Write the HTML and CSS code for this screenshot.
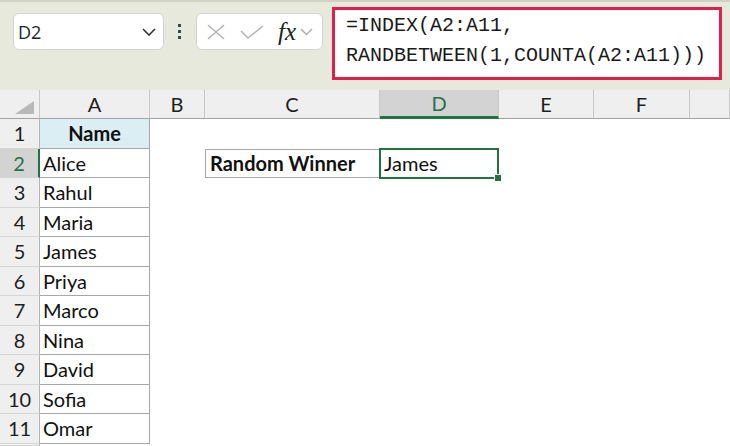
FILE: index.html
```html
<!DOCTYPE html>
<html>

<head>
    <title>Random Winner</title>
    <link rel="stylesheet" href="styles.css">
</head>

<body>
    <div class="toolbar">
        <div class="nameBox">
            <span>D2</span>
            <svg width="14" height="8" viewBox="0 0 14 8"><path d="M1 1 L7 7 L13 1" fill="none" stroke="#333" stroke-width="1.6"/></svg>
        </div>
        <div class="grip"><i></i><i></i><i></i></div>
        <div class="fxBox">
            <svg width="18" height="16" viewBox="0 0 18 16"><path d="M1 1 L17 15 M17 1 L1 15" fill="none" stroke="#b4b4b4" stroke-width="1.5"/></svg>
            <svg width="24" height="14" viewBox="0 0 24 14"><path d="M1 6 L8 13 L23 1" fill="none" stroke="#b4b4b4" stroke-width="1.5"/></svg>
            <span class="fx">fx</span>
            <svg width="13" height="8" viewBox="0 0 13 8"><path d="M1 1 L6.5 6.5 L12 1" fill="none" stroke="#aaa" stroke-width="1.4"/></svg>
        </div>
        <div class="formula">=INDEX(A2:A11,<br>RANDBETWEEN(1,COUNTA(A2:A11)))</div>
    </div>

    <div class="sheet">
        <div class="row headRow">
            <div class="corner"><svg width="19" height="13" viewBox="0 0 19 13"><path d="M19 0 L19 13 L0 13 Z" fill="#b9b9b9"/></svg></div>
            <div class="colHead">A</div>
            <div class="colHead">B</div>
            <div class="colHead">C</div>
            <div class="colHead active">D</div>
            <div class="colHead">E</div>
            <div class="colHead">F</div>
            <div class="colHead"></div>
        </div>
        <div class="row">
            <div class="rowHead">1</div>
            <div class="cell nameCell">Name</div>
        </div>
        <div class="row">
            <div class="rowHead active">2</div>
            <div class="cell">Alice</div>
            <div></div>
            <div class="labelCell">Random Winner</div>
            <div class="resultCell">James<span class="handle"></span></div>
        </div>
        <div class="row">
            <div class="rowHead">3</div>
            <div class="cell">Rahul</div>
        </div>
        <div class="row">
            <div class="rowHead">4</div>
            <div class="cell">Maria</div>
        </div>
        <div class="row">
            <div class="rowHead">5</div>
            <div class="cell">James</div>
        </div>
        <div class="row">
            <div class="rowHead">6</div>
            <div class="cell">Priya</div>
        </div>
        <div class="row">
            <div class="rowHead">7</div>
            <div class="cell">Marco</div>
        </div>
        <div class="row">
            <div class="rowHead">8</div>
            <div class="cell">Nina</div>
        </div>
        <div class="row">
            <div class="rowHead">9</div>
            <div class="cell">David</div>
        </div>
        <div class="row">
            <div class="rowHead">10</div>
            <div class="cell">Sofia</div>
        </div>
        <div class="row">
            <div class="rowHead">11</div>
            <div class="cell">Omar</div>
        </div>
        <div class="row stubRow">
            <div class="rowHead"></div>
        </div>
    </div>
</body>

</html>
```

FILE: styles.css
```css
* {
    box-sizing: border-box;
}
body {
    margin: 0;
    width: 730px;
    height: 446px;
    overflow: hidden;
    background-color: #fff;
    font-family: Lato, "Liberation Sans", sans-serif;
    color: #111;
}
.toolbar {
    display: flex;
    align-items: flex-start;
    height: 90px;
    background-color: #e6e9dc;
    border-top: 2px solid #cfd2c6;
}
.nameBox {
    display: flex;
    align-items: center;
    justify-content: space-between;
    width: 151px;
    height: 37px;
    margin: 11px 0 0 13px;
    padding: 0 7px 0 4px;
    background-color: #fff;
    border: 1px solid #d4d6cd;
    border-radius: 6px;
    font-family: "Open Sans", sans-serif;
    font-size: 18px;
    color: #1e1e1e;
}
.grip {
    display: flex;
    flex-direction: column;
    gap: 3px;
    margin: 22px 0 0 14px;
}
.grip i {
    display: block;
    width: 3px;
    height: 3px;
    background-color: #3c4450;
}
.fxBox {
    display: flex;
    align-items: center;
    width: 127px;
    height: 37px;
    margin: 11px 0 0 15px;
    padding: 0 4px 0 10px;
    background-color: #fff;
    border: 1px solid #d4d6cd;
    border-radius: 6px;
}
.fxBox svg:nth-child(2) {
    margin-left: 15px;
}
.fx {
    margin-left: 14px;
    font-family: "Liberation Serif", serif;
    font-style: italic;
    font-size: 25px;
    color: #222;
    line-height: 1;
}
.fxBox svg:last-child {
    margin-left: 4px;
}
.formula {
    width: 390px;
    height: 73px;
    margin: 5px 0 0 9px;
    padding: 1px 0 0 11px;
    background-color: #fff;
    border: 3px solid #e01f4b;
    font-family: "Liberation Mono", monospace;
    font-size: 20px;
    line-height: 30px;
    color: #1a1a1a;
}
.row {
    display: grid;
    grid-template-columns: 40px 110px 55px 175px 119px 95px 96px 1fr;
    height: 29.5px;
    font-size: 20px;
}
.headRow {
    height: 29px;
}
.stubRow {
    height: 2.5px;
}
.corner,
.colHead {
    background-color: #efefef;
    border-right: 1px solid #c8c8c8;
    border-bottom: 1px solid #a2a2a2;
}
.corner {
    display: flex;
    align-items: flex-end;
    justify-content: flex-end;
    padding: 0 5px 4px 0;
}
.colHead {
    display: flex;
    align-items: center;
    justify-content: center;
    color: #1e1e1e;
}
.colHead.active {
    background-color: #d3d3d3;
    color: #217346;
    border-bottom: 3px solid #217346;
}
.rowHead {
    display: flex;
    align-items: center;
    justify-content: center;
    background-color: #efefef;
    border-right: 1px solid #b4b4b4;
    border-bottom: 1px solid #d6d6d6;
    color: #1e1e1e;
}
.rowHead.active {
    background-color: #d3d3d3;
    color: #217346;
    border-right: 2px solid #217346;
}
.cell {
    display: flex;
    align-items: center;
    padding-left: 3px;
    border-right: 1px solid #a8a8a8;
    border-bottom: 1px solid #a8a8a8;
}
.nameCell {
    justify-content: center;
    padding-left: 0;
    background-color: #daeef3;
    font-weight: bold;
}
.labelCell {
    display: flex;
    align-items: center;
    padding-left: 4px;
    border: 1px solid #a8a8a8;
    border-right: none;
    font-weight: bold;
}
.resultCell {
    position: relative;
    display: flex;
    align-items: center;
    margin: -1px 0 -1px -1px;
    padding-left: 3px;
    border: 2px solid #217346;
}
.handle {
    position: absolute;
    right: -5px;
    bottom: -5px;
    width: 8px;
    height: 8px;
    background-color: #217346;
    border: 1px solid #fff;
}
```
